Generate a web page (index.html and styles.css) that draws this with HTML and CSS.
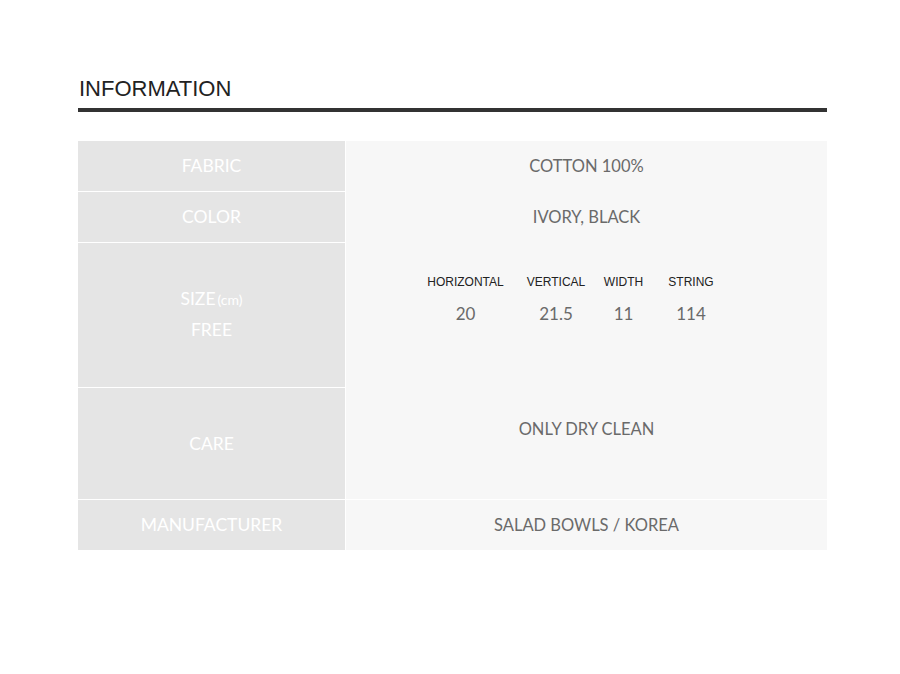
FILE: index.html
```html
<!DOCTYPE html>
<html>
<head>
<meta charset="utf-8">
<link rel="stylesheet" href="styles.css">
</head>
<body>
<div class="page">
  <h2 class="title">INFORMATION</h2>
  <div class="rule"></div>
  <div class="table">
    <div class="row r1">
      <div class="head">FABRIC</div>
      <div class="val center">COTTON 100%</div>
    </div>
    <div class="row r2">
      <div class="head">COLOR</div>
      <div class="val center">IVORY, BLACK</div>
    </div>
    <div class="row r3">
      <div class="head stack"><span>SIZE<small>(cm)</small></span><span>FREE</span></div>
      <div class="val top3">
        <div class="sizes">
          <div class="sh">HORIZONTAL</div>
          <div class="sh">VERTICAL</div>
          <div class="sh">WIDTH</div>
          <div class="sh">STRING</div>
          <div class="sn">20</div>
          <div class="sn">21.5</div>
          <div class="sn">11</div>
          <div class="sn">114</div>
        </div>
      </div>
    </div>
    <div class="row r4">
      <div class="head">CARE</div>
      <div class="val top4">ONLY DRY CLEAN</div>
    </div>
    <div class="row r5">
      <div class="head">MANUFACTURER</div>
      <div class="val center">SALAD BOWLS / KOREA</div>
    </div>
  </div>
</div>
</body>
</html>
```
FILE: styles.css
```css
html, body {
  margin: 0;
  padding: 0;
  background: #fff;
}
.page {
  width: 749px;
  margin-left: 78px;
  padding-top: 75px;
}
.title {
  margin: 0 0 0 1px;
  font-family: "Liberation Sans", Arial, sans-serif;
  font-weight: normal;
  font-size: 22px;
  line-height: 27px;
  color: #222;
}
.rule {
  height: 4px;
  background: #333;
  margin-top: 6px;
}
.table {
  margin-top: 29px;
  font-family: Lato, "Open Sans", sans-serif;
}
.row {
  display: grid;
  grid-template-columns: 268px 1fr;
  column-gap: 0;
  background: #fff;
}
.head {
  background: #e5e5e5;
  color: #fff;
  font-size: 17.5px;
  display: flex;
  align-items: center;
  justify-content: center;
  border-bottom: 1px solid #fff;
  border-right: 1px solid #fff;
  padding-bottom: 1px;
}
.val {
  background: #f7f7f7;
  color: #6a6a6a;
  font-size: 16.5px;
  text-align: center;
  border-bottom: 1px solid #f7f7f7;
}
.center {
  display: flex;
  align-items: center;
  justify-content: center;
  padding-bottom: 1px;
}
.r1, .r2 { height: 51px; }
.r3 { height: 145px; }
.r4 { height: 112px; }
.r5 { height: 50px; }
.r4 .val { border-bottom-color: #fff; }
.r5 .head, .r5 .val { border-bottom: 0; }
.stack {
  flex-direction: column;
  line-height: 30px;
  padding-bottom: 1px;
}
.stack small {
  font-size: 14px;
  margin-left: 2px;
}
.top3 {
  padding-top: 31px;
  display: flex;
  justify-content: center;
}
.sizes {
  display: grid;
  grid-template-columns: 99px 82px 53px 82px;
  margin-right: 25px;
  align-content: start;
}
.sh {
  font-family: "Liberation Sans", Arial, sans-serif;
  font-size: 12px;
  line-height: 16px;
  color: #222;
}
.sn {
  font-size: 17px;
  line-height: 20px;
  margin-top: 14px;
  color: #6a6a6a;
}
.top4 {
  padding-top: 31px;
  line-height: 20px;
}
```
